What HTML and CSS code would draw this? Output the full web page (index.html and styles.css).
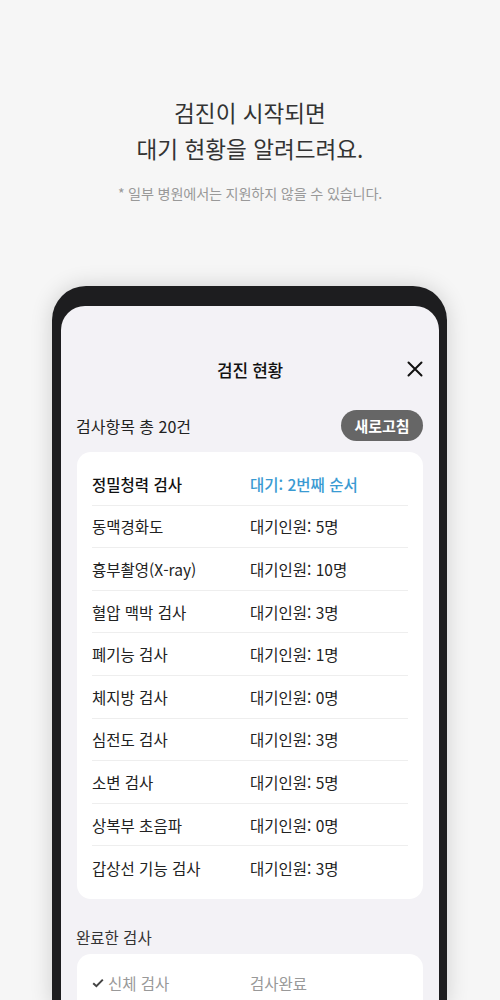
FILE: index.html
```html
<!DOCTYPE html>
<html lang="ko">
<head>
<meta charset="utf-8">
<link rel="stylesheet" href="styles.css">
</head>
<body>
<div class="page">
  <div class="intro">
    <h1 class="headline">검진이 시작되면<br>대기 현황을 알려드려요.</h1>
    <p class="note">* 일부 병원에서는 지원하지 않을 수 있습니다.</p>
  </div>
  <div class="phone">
    <div class="screen">
      <div class="titlebar">
        <span class="title">검진 현황</span>
        <svg class="close" width="16" height="16" viewBox="0 0 16 16"><path d="M1.5 1.5 L14.5 14.5 M14.5 1.5 L1.5 14.5" stroke="#111" stroke-width="2" fill="none" stroke-linecap="round"/></svg>
      </div>
      <div class="summary">
        <span class="count">검사항목 총 20건</span>
        <span class="refresh">새로고침</span>
      </div>
      <div class="card">
        <div class="row current"><span class="name">정밀청력 검사</span><span class="status">대기: 2번째 순서</span></div>
        <div class="row"><span class="name">동맥경화도</span><span class="status">대기인원: 5명</span></div>
        <div class="row"><span class="name">흉부촬영(X-ray)</span><span class="status">대기인원: 10명</span></div>
        <div class="row"><span class="name">혈압 맥박 검사</span><span class="status">대기인원: 3명</span></div>
        <div class="row"><span class="name">폐기능 검사</span><span class="status">대기인원: 1명</span></div>
        <div class="row"><span class="name">체지방 검사</span><span class="status">대기인원: 0명</span></div>
        <div class="row"><span class="name">심전도 검사</span><span class="status">대기인원: 3명</span></div>
        <div class="row"><span class="name">소변 검사</span><span class="status">대기인원: 5명</span></div>
        <div class="row"><span class="name">상복부 초음파</span><span class="status">대기인원: 0명</span></div>
        <div class="row"><span class="name">갑상선 기능 검사</span><span class="status">대기인원: 3명</span></div>
      </div>
      <div class="section-label">완료한 검사</div>
      <div class="card done-card">
        <div class="row done"><span class="name"><svg class="check" width="12" height="10" viewBox="0 0 12 10"><path d="M1.2 5.2 L4.4 8.2 L10.8 1.6" stroke="#444" stroke-width="2" fill="none"/></svg>신체 검사</span><span class="status">검사완료</span></div>
      </div>
    </div>
  </div>
</div>
</body>
</html>
```
FILE: styles.css
```css
* { box-sizing: border-box; }
html, body {
  margin: 0;
  padding: 0;
}
body {
  width: 500px;
  height: 1000px;
  overflow: hidden;
  background: #f6f6f6;
  font-family: "Noto Sans CJK KR", "Noto Sans", sans-serif;
  color: #222;
}
.page {
  display: flex;
  flex-direction: column;
  align-items: center;
}
.intro {
  padding-top: 95px;
  text-align: center;
}
.headline {
  margin: 0;
  font-size: 22.6px;
  line-height: 36px;
  font-weight: 400;
  color: #333;
}
.note {
  margin: 16px 0 0;
  font-size: 14.2px;
  line-height: 20px;
  color: #999;
  letter-spacing: -0.2px;
}
.phone {
  margin-top: 83px;
  margin-left: -1px;
  width: 395px;
  height: 720px;
  background: #1d1d1f;
  border-radius: 34px 34px 0 0;
  padding: 20px 8px 0 9px;
  box-shadow: 0 0 22px rgba(0,0,0,0.16);
}
.screen {
  height: 100%;
  background: #f3f2f6;
  border-radius: 24px 24px 0 0;
  padding: 38px 16px 0 16px;
}
.titlebar {
  height: 50px;
  display: flex;
  align-items: center;
  justify-content: center;
  position: relative;
}
.title {
  font-size: 17px;
  font-weight: 500;
  color: #111;
  letter-spacing: -0.3px;
}
.close {
  position: absolute;
  right: 0;
  top: 17px;
}
.summary {
  margin-top: 16px;
  height: 31px;
  display: flex;
  align-items: center;
  justify-content: space-between;
}
.count {
  font-size: 16px;
  color: #222;
  margin-left: -1px;
}
.refresh {
  width: 82px;
  height: 31px;
  border-radius: 16px;
  background: #666;
  color: #fff;
  font-size: 15px;
  font-weight: 700;
  display: flex;
  align-items: center;
  justify-content: center;
}
.card {
  margin-top: 11px;
  background: #fff;
  border-radius: 14px;
  padding: 11px 15px 10px;
}
.row {
  display: flex;
  align-items: center;
  height: 42.6px;
  font-size: 15.5px;
  color: #222;
  border-bottom: 1px solid #eeeeee;
}
.row:last-child { border-bottom: none; }
.name {
  width: 158px;
  display: flex;
  align-items: center;
}
.current .name { font-weight: 500; color: #111; }
.current .status { color: #3a9ad2; font-weight: 500; }
.done { color: #999; }
.check { margin-right: 4px; }
.section-label {
  margin-top: 28px;
  margin-left: -1px;
  font-size: 15.5px;
  line-height: 20px;
  color: #333;
}
.done-card {
  margin-top: 7px;
  padding-top: 8px;
}
```
